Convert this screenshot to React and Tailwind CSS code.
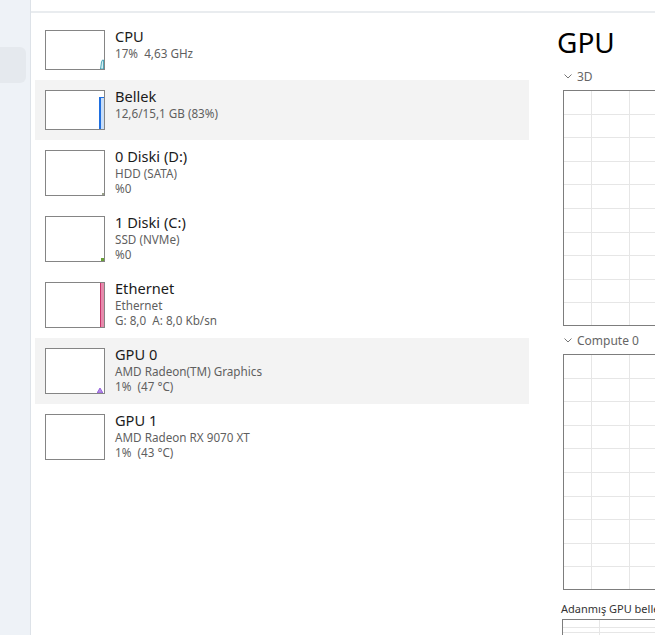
import React from "react";

const font = "font-[family-name:'Noto_Sans',sans-serif]";

function Thumb({ h, kind }) {
  return (
    <div
      className={`relative w-[60px] shrink-0 border border-[#858585] bg-white ${h === 40 ? "h-[40px]" : "h-[46px]"}`}
    >
      {kind === "cpu" && (
        <svg className="absolute right-0 bottom-0" width="4" height="10" viewBox="0 0 4 10">
          <path d="M0.5 10 L1.5 3 L2.5 1 L3.5 1 L3.5 10 Z" fill="#d4eef2" stroke="#2a93a8" strokeWidth="0.8" />
        </svg>
      )}
      {kind === "mem" && (
        <div className="absolute right-0 bottom-0 h-[32px] w-[5px] border-l-2 border-t border-[#1f6fe0] bg-[#c9def8]" />
      )}
      {kind === "disk0" && (
        <div className="absolute right-0 bottom-0 h-[2px] w-[2px] bg-[#9aa28a]" />
      )}
      {kind === "disk1" && (
        <div className="absolute right-0 bottom-0 h-[3px] w-[3px] bg-[#6aa138]" />
      )}
      {kind === "eth" && (
        <div className="absolute right-0 top-0 bottom-0 w-[4px] border-l border-[#c8326a] bg-[#e58aab]" />
      )}
      {kind === "gpu0" && (
        <svg className="absolute right-[1px] bottom-0" width="6" height="5" viewBox="0 0 6 5">
          <path d="M0 5 L3 0 L6 5 Z" fill="#b18ae6" stroke="#8a4fd6" strokeWidth="0.8" />
        </svg>
      )}
    </div>
  );
}

function Row({ title, lines, kind, selected, tall }) {
  return (
    <div
      className={`flex pl-[10px] pt-[10px] ${tall ? "h-[66px]" : "h-[60px]"} ${selected ? "bg-[#f3f3f3]" : ""}`}
    >
      <Thumb h={tall ? 46 : 40} kind={kind} />
      <div className="ml-[10px] -mt-[4px]">
        <div className="text-[14.6px] leading-[20px] text-[#1b1b1b]">{title}</div>
        {lines.map((l, i) => (
          <div key={i} className="text-[11.7px] leading-[15px] text-[#5f5f5f] whitespace-pre">
            {l}
          </div>
        ))}
      </div>
    </div>
  );
}

function Grid({ height, rows, colStart }) {
  const w = 200;
  const hl = [];
  for (let i = 1; i < rows; i++) {
    const y = Math.round((height * i) / rows) + 0.5;
    hl.push(<line key={"h" + i} x1="0" x2={w} y1={y} y2={y} stroke="#e6e6e6" strokeWidth="1" />);
  }
  const vl = [];
  for (let x = colStart; x < w; x += 38) {
    vl.push(<line key={"v" + x} x1={x + 0.5} x2={x + 0.5} y1="0" y2={height} stroke="#e6e6e6" strokeWidth="1" />);
  }
  return (
    <svg width={w} height={height} className="block">
      {hl}
      {vl}
      <rect x="0.5" y="0.5" width={w} height={height - 1} fill="none" stroke="#7d7d7d" strokeWidth="1" />
    </svg>
  );
}

function Label({ text }) {
  return (
    <div className="flex items-center text-[12px] leading-[15px] text-[#666666]">
      <svg width="8" height="5" viewBox="0 0 8 5" className="ml-[1px] mr-[5px]">
        <path d="M0.5 0.5 L4 4 L7.5 0.5" fill="none" stroke="#777" strokeWidth="1" />
      </svg>
      {text}
    </div>
  );
}

export default function App() {
  return (
    <div className={`flex h-[635px] w-[655px] overflow-hidden bg-white ${font}`}>
      <div className="w-[31px] shrink-0 border-r border-[#dde2e8] bg-[#eef2f7] pt-[47px]">
        <div className="h-[36px] w-[26px] rounded-r-[6px] bg-[#e5e9ee]" />
      </div>
      <div className="flex min-w-0 flex-1 flex-col">
        <div className="h-[13px] shrink-0 border-b-2 border-[#e9ecef]" />
        <div className="flex min-h-0 flex-1">
          <div className="w-[498px] shrink-0 pl-[4px] pt-[7px]">
            <Row title="CPU" lines={["17%  4,63 GHz"]} kind="cpu" />
            <Row title="Bellek" lines={["12,6/15,1 GB (83%)"]} kind="mem" selected />
            <Row title="0 Diski (D:)" lines={["HDD (SATA)", "%0"]} kind="disk0" tall />
            <Row title="1 Diski (C:)" lines={["SSD (NVMe)", "%0"]} kind="disk1" tall />
            <Row title="Ethernet" lines={["Ethernet", "G: 8,0  A: 8,0 Kb/sn"]} kind="eth" tall />
            <Row title="GPU 0" lines={["AMD Radeon(TM) Graphics", "1%  (47 °C)"]} kind="gpu0" selected tall />
            <Row title="GPU 1" lines={["AMD Radeon RX 9070 XT", "1%  (43 °C)"]} kind="gpu1" tall />
          </div>
          <div className="min-w-0 flex-1 pl-[28px] pt-[15px]">
            <div className="text-[28px] leading-[28px] text-black">GPU</div>
            <div className="ml-[6px] mt-[13px]">
              <Label text="3D" />
            </div>
            <div className="ml-[6px] mt-[6px]">
              <Grid height={236} rows={10} colStart={28} />
            </div>
            <div className="ml-[6px] mt-[7px]">
              <Label text="Compute 0" />
            </div>
            <div className="ml-[6px] mt-[6px]">
              <Grid height={236} rows={10} colStart={28} />
            </div>
            <div className="ml-[4px] mt-[11px] text-[11px] leading-[15px] text-[#333333] whitespace-nowrap">
              Adanmış GPU belleği kullanımı
            </div>
            <div className="ml-[5px] mt-[3px]">
              <svg width="200" height="40" className="block">
                <line x1="0" x2="200" y1="8.5" y2="8.5" stroke="#e6e6e6" />
                <line x1="0" x2="200" y1="13.5" y2="13.5" stroke="#e6e6e6" />
                <line x1="37.5" x2="37.5" y1="0" y2="40" stroke="#e6e6e6" />
                <rect x="0.5" y="0.5" width="200" height="60" fill="none" stroke="#7d7d7d" />
              </svg>
            </div>
          </div>
        </div>
      </div>
    </div>
  );
}
